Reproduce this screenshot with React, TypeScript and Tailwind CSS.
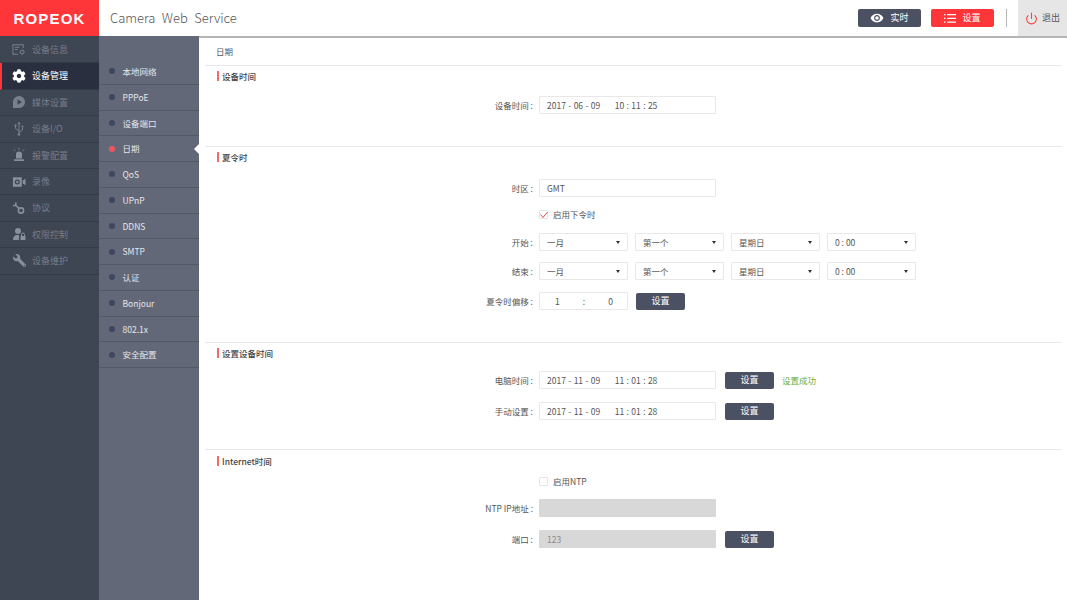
import React from "react";
import { FaCog, FaWrench } from "react-icons/fa";
import { MdVisibility } from "react-icons/md";
import { Power } from "lucide-react";

const font = { fontFamily: '"Noto Sans CJK SC", "Noto Sans", sans-serif' };

const InfoIcon = () => (
  <svg width="15" height="13" viewBox="0 0 15 13" fill="none" stroke="#7a808c" strokeWidth="1.1">
    <path d="M6.500 11.500H1V1.500h11v3.500" />
    <path d="M3 4h5M3 6.500h3" />
    <circle cx="10.800" cy="9.300" r="2" strokeWidth="1.500" strokeDasharray="1.600 0.500" />
  </svg>
);
const PlayIcon = () => (
  <svg width="14" height="14" viewBox="0 0 14 14">
    <path fill="#7a808c" d="M7 1a6 6 0 1 1 0 12H1V7a6 6 0 0 1 6-6z" />
    <path fill="#3e4553" d="M5.500 4.200 10 7l-4.500 2.800z" />
  </svg>
);
const UsbIcon = () => (
  <svg width="12" height="15" viewBox="0 0 12 15" fill="none" stroke="#7a808c" strokeWidth="1">
    <path d="M6 2v12M6 10 2.500 7.500V5M6 11.500l3.500-2.500V6.500" />
    <path d="M6 0.500 7.500 3h-3z" fill="#7a808c" stroke="none" />
    <rect x="1.500" y="3.500" width="2" height="2" fill="#7a808c" stroke="none" />
    <circle cx="9.500" cy="5.500" r="1.100" fill="#7a808c" stroke="none" />
    <circle cx="6" cy="13.500" r="1.300" fill="#7a808c" stroke="none" />
  </svg>
);
const AlarmIcon = () => (
  <svg width="14" height="14" viewBox="0 0 14 14" fill="#8a909b">
    <path d="M4 10.500V6.500a3 3 0 0 1 6 0v4z" />
    <path d="M2 11.300h10V13H2z" />
    <path d="M7 0v1.500M2 1.500 3.200 2.800M12 1.500 10.800 2.800" stroke="#8a909b" strokeWidth="1" />
  </svg>
);
const VideoIcon = () => (
  <svg width="15" height="12" viewBox="0 0 15 12">
    <path fill="#8a909b" fillRule="evenodd" d="M1 1h9.500v10H1zM5.700 3.300a2.700 2.700 0 1 0 0 5.400 2.700 2.700 0 0 0 0-5.400z" />
    <circle cx="5.700" cy="6" r="1.300" fill="#8a909b" />
    <path fill="#8a909b" d="M11.500 4.500 14.500 2.500v7l-3-2z" />
  </svg>
);
const ProtoIcon = () => (
  <svg width="14" height="14" viewBox="0 0 14 14" fill="none" stroke="#8a909b" strokeWidth="1.600">
    <circle cx="9" cy="9.500" r="2.600" />
    <path d="M7 7.500 3.500 4M3.800 1.500v3H1" />
  </svg>
);
const PermIcon = () => (
  <svg width="14" height="14" viewBox="0 0 14 14" fill="#8a909b">
    <circle cx="6" cy="4" r="3" />
    <path d="M1 13c0-3 1.500-5 4-5h2v5z" />
    <rect x="8.500" y="9" width="5" height="4" />
    <path d="M9.500 9V7.500a1.500 1.500 0 0 1 3 0V9" fill="none" stroke="#8a909b" />
  </svg>
);

const mainMenu: [string, React.ReactNode][] = [
  ["设备信息", <InfoIcon />],
  ["设备管理", <FaCog size={14} color="#ffffff" />],
  ["媒体设置", <PlayIcon />],
  ["设备I/O", <UsbIcon />],
  ["报警配置", <AlarmIcon />],
  ["录像", <VideoIcon />],
  ["协议", <ProtoIcon />],
  ["权限控制", <PermIcon />],
  ["设备维护", <FaWrench size={13} color="#8a909b" className="-scale-x-100" />],
];
const subMenu = ["本地网络", "PPPoE", "设备端口", "日期", "QoS", "UPnP", "DDNS", "SMTP", "认证", "Bonjour", "802.1x", "安全配置"];

const Title = ({ t }: { t: string }) => (
  <div className="flex items-center h-[10px] ml-[12px] pl-[3px] border-l-2 border-[#f36a6e] text-[8.500px] font-medium text-[#444]">{t}</div>
);
const Label = ({ t }: { t: string }) => (
  <div className="w-[334px] shrink-0 pr-[6px] text-right text-[8.500px] text-[#555] whitespace-nowrap">{t}</div>
);
const Input = ({ children, off }: { children?: React.ReactNode; off?: boolean }) => (
  <div className={`w-[177px] h-[18px] flex items-center pl-[7px] text-[8.500px] border rounded-[1px] whitespace-pre [word-spacing:0.500px] ${off ? "bg-[#d9d8d8] border-[#d9d8d8] text-[#8a8a8a]" : "bg-white border-[#e8e8e8] text-[#555]"}`}>{children}</div>
);
const Btn = ({ narrow }: { narrow?: boolean }) => (
  <div className={`w-[49px] h-[17px] flex items-center justify-center bg-[#4b5163] rounded-[2px] text-white text-[9px] ${narrow ? "ml-[8px]" : "ml-[9px]"}`}>设置</div>
);
const Select = ({ t }: { t: string }) => (
  <div className="w-[89px] h-[18px] mr-[7px] flex items-center justify-between pl-[7px] pr-[7px] bg-white border border-[#e8e8e8] rounded-[1px] text-[8.500px] text-[#555]">
    <span>{t}</span>
    <span className="w-0 h-0 border-x-[2.500px] border-x-transparent border-t-[3px] border-t-[#333]" />
  </div>
);
const Row = ({ label, children, mt }: { label: string; children: React.ReactNode; mt: string }) => (
  <div className={`flex items-center ${mt}`}>
    <Label t={label} />
    {children}
  </div>
);
const Check = ({ on, t, mt }: { on?: boolean; t: string; mt: string }) => (
  <div className={`flex items-center h-[10px] pl-[334px] ${mt}`}>
    <div className="relative w-[9px] h-[9px] border border-[#e4e4e4] rounded-[1px] bg-white">
      {on && (
        <svg className="absolute -left-[1px] -top-[1px]" width="10" height="10" viewBox="0 0 10 10" fill="none" stroke="#f0444a" strokeWidth="1">
          <path d="M1.500 4.500 4 7.500 8.500 2" />
        </svg>
      )}
    </div>
    <span className="ml-[5px] text-[8.500px] text-[#555]">{t}</span>
  </div>
);

export default function App() {
  return (
    <div style={font} className="w-[1067px] h-[600px] flex flex-col overflow-hidden bg-white">
      <header className="h-[36px] shrink-0 flex items-center">
        <div className="w-[99px] h-full bg-[#fe3639] flex items-center justify-center">
          <span style={{ fontFamily: '"Liberation Sans", sans-serif' }} className="text-white font-bold text-[15px] tracking-[1.200px] leading-none">ROPEOK</span>
        </div>
        <div className="ml-[11px] text-[13px] text-[#555] font-light [word-spacing:3.500px]">Camera Web Service</div>
        <div className="ml-auto flex items-center h-full">
          <div className="w-[63px] h-[18px] flex items-center justify-center gap-[6px] bg-[#4b5163] rounded-[2px] text-white text-[9px]">
            <MdVisibility size={14} color="#fff" />
            <span>实时</span>
          </div>
          <div className="w-[63px] h-[18px] ml-[10px] flex items-center justify-center gap-[6px] bg-[#fe3639] rounded-[2px] text-white text-[9px]">
            <svg width="12" height="9" viewBox="0 0 12 9" fill="#fff">
              <path d="M0 0h1.500v1.200H0zM3 0h9v1.200H3zM0 3.800h1.500V5H0zM3 3.800h9V5H3zM0 7.600h1.500v1.200H0zM3 7.600h9v1.200H3z" />
            </svg>
            <span>设置</span>
          </div>
          <div className="w-px h-[18px] ml-[12px] bg-[#b8b8b8]" />
          <div className="w-[49px] h-full ml-[11px] bg-[#e6e6e6] flex items-center justify-center gap-[4px] text-[9px] text-[#555]">
            <Power size={13} color="#f0444a" strokeWidth={2} />
            <span>退出</span>
          </div>
        </div>
      </header>
      <div className="flex-1 flex min-h-0">
        <nav className="w-[99px] shrink-0 bg-[#3e4553] pt-[1px]">
          {mainMenu.map(([t, icon], i) => (
            <div key={t} className={`h-[26.400px] flex items-center border-b border-[#343a47] ${i === 1 ? "bg-[#292f3e] border-l-2 border-l-[#fe3639] pl-[10px] text-white" : "pl-[12px] text-[#777d89]"}`}>
              <span className="w-[14px] flex justify-center shrink-0">{icon}</span>
              <span className="ml-[6px] text-[9px]">{t}</span>
            </div>
          ))}
        </nav>
        <nav className="w-[100px] shrink-0 bg-[#636878] pt-[23px]">
          {subMenu.map((t, i) => (
            <div key={t} className="relative h-[25.750px] flex items-center pl-[10px] border-b border-[#535866] text-[8.500px] text-[#e4e5e8]">
              <span className={`w-[6px] h-[6px] rounded-full ${i === 3 ? "bg-[#f0555a]" : "bg-[#3f4662]"}`} />
              <span className="ml-[7.500px]">{t}</span>
              {i === 3 && <span className="absolute right-0 top-[8px] w-0 h-0 border-y-[5px] border-y-transparent border-r-[5px] border-r-white" />}
            </div>
          ))}
        </nav>
        <main className="flex-1 min-w-0 pl-[6px] pr-[5px] border-t-2 border-[#b5b5b5]">
          <div className="h-[28px] flex items-center pl-[11px] border-b border-[#e8e8e8] text-[8.500px] text-[#555]">日期</div>

          <section className="h-[81px] border-b border-[#e8e8e8] pt-[5px]">
            <Title t="设备时间" />
            <Row label="设备时间 :" mt="mt-[15px]">
              <Input>2017 - 06 - 09      10 : 11 : 25</Input>
            </Row>
          </section>

          <section className="h-[196px] border-b border-[#e8e8e8] pt-[5px]">
            <Title t="夏令时" />
            <Row label="时区 :" mt="mt-[17px]">
              <Input>GMT</Input>
            </Row>
            <Check on t="启用下令时" mt="mt-[12px]" />
            <Row label="开始 :" mt="mt-[14px]">
              <Select t="一月" /><Select t="第一个" /><Select t="星期日" /><Select t="0 : 00" />
            </Row>
            <Row label="结束 :" mt="mt-[11px]">
              <Select t="一月" /><Select t="第一个" /><Select t="星期日" /><Select t="0 : 00" />
            </Row>
            <Row label="夏令时偏移 :" mt="mt-[12px]">
              <div className="w-[89px] h-[18px] flex items-center justify-between pl-[15px] pr-[14px] border border-[#e8e8e8] rounded-[1px] text-[8.500px] text-[#555]">
                <span>1</span><span>:</span><span>0</span>
              </div>
              <Btn narrow />
            </Row>
          </section>

          <section className="h-[107px] border-b border-[#e8e8e8] pt-[5px]">
            <Title t="设置设备时间" />
            <Row label="电脑时间 :" mt="mt-[13px]">
              <Input>2017 - 11 - 09      11 : 01 : 28</Input>
              <Btn />
              <span className="ml-[8px] text-[8.500px] text-[#6cae3c]">设置成功</span>
            </Row>
            <Row label="手动设置 :" mt="mt-[13px]">
              <Input>2017 - 11 - 09      11 : 01 : 28</Input>
              <Btn />
            </Row>
          </section>

          <section className="pt-[6px]">
            <Title t="Internet时间" />
            <Check t="启用NTP" mt="mt-[10px]" />
            <Row label="NTP IP地址 :" mt="mt-[13px]">
              <Input off />
            </Row>
            <Row label="端口 :" mt="mt-[13px]">
              <Input off>123</Input>
              <Btn />
            </Row>
          </section>
        </main>
      </div>
    </div>
  );
}
